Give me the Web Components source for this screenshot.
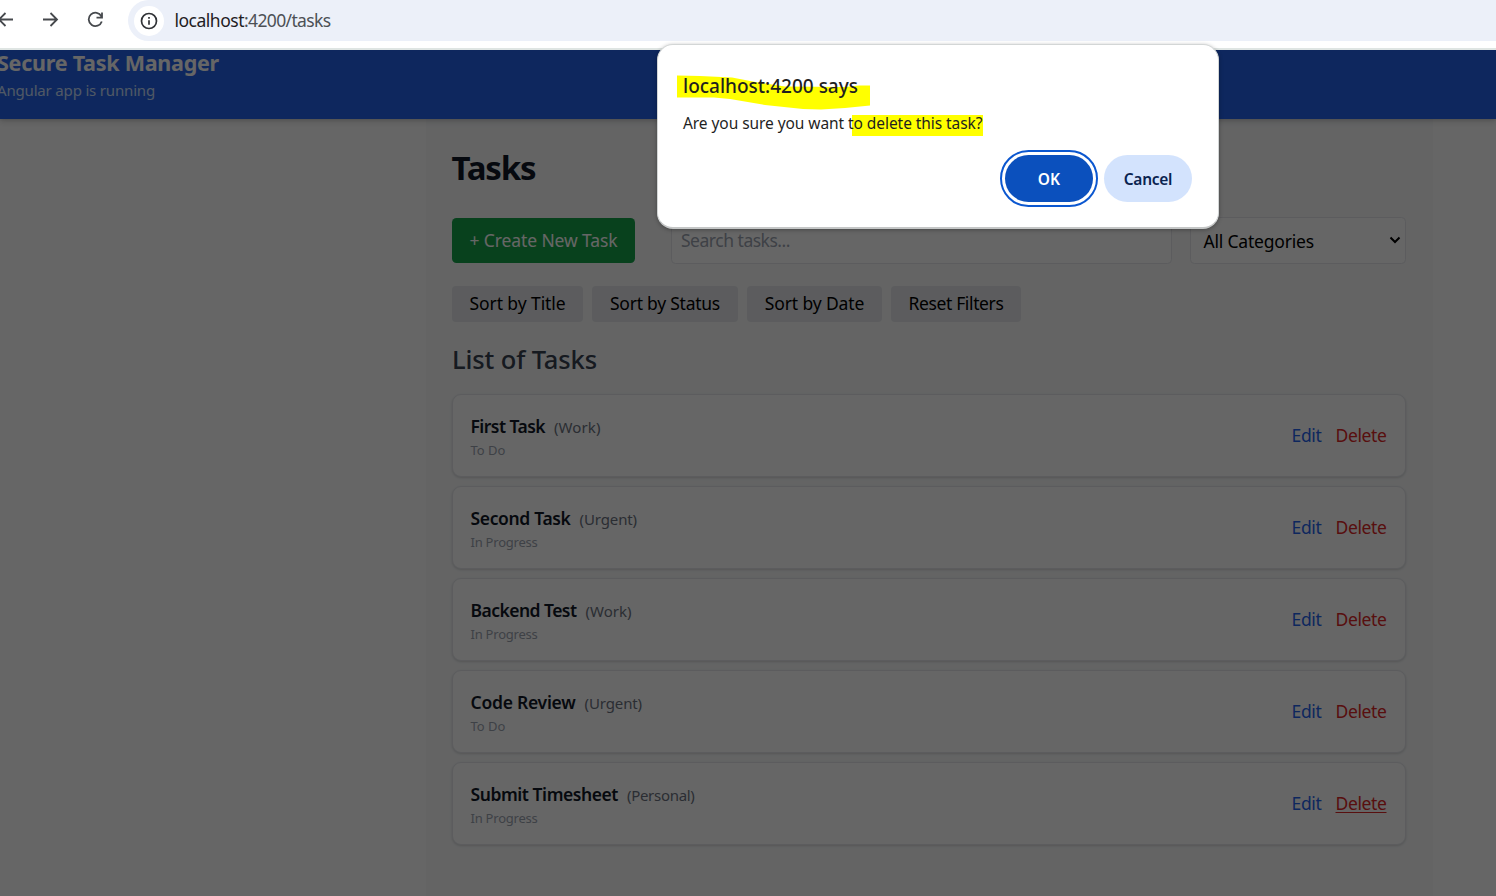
<!DOCTYPE html>
<html lang="en">
<head>
<meta charset="utf-8">
<title>Secure Task Manager</title>
<style>
html,body{margin:0;height:100%;overflow:hidden;background:#fff}
body{font-family:"Noto Sans","Open Sans",sans-serif}
</style>
</head>
<body>
<browser-window></browser-window>
<script>
const define = (name, html, setup) => {
  const t = document.createElement('template');
  t.innerHTML = '<style>*{box-sizing:border-box}:host{display:block;box-sizing:border-box}</style>' + html;
  customElements.define(name, class extends HTMLElement {
    constructor() { super(); this.attachShadow({mode: 'open'}); }
    connectedCallback() {
      if (this.shadowRoot.childNodes.length) return;
      this.shadowRoot.append(t.content.cloneNode(true));
      if (setup) setup(this, this.shadowRoot);
    }
  });
};

/* A single line of text tracked so that it fills the width given in "w". */
define('text-line', `<style>:host{display:inline-block;white-space:nowrap;flex:none}span{display:inline-block;text-decoration:var(--line,none);text-decoration-thickness:1px;text-underline-offset:2px}</style><span></span>`, (el, r) => {
  const s = r.querySelector('span');
  s.textContent = el.getAttribute('text');
  const w = +el.getAttribute('w');
  const natural = s.getBoundingClientRect().width;
  s.style.letterSpacing = ((w - natural) / s.textContent.length) + 'px';
});

define('browser-bar', `<style>
:host{height:50px;background:#fff;border-bottom:2px solid #dfe5e3;position:relative;flex:none}
.row{display:flex;height:41px}
.nav{width:128px;flex:none;display:block}
.pill{flex:1;background:#ecf0f9;border-radius:21px 0 0 21px;display:flex;align-items:center;padding-left:6px;gap:10.500px}
.info{width:30px;height:30px;border-radius:50%;background:#fff;display:flex;align-items:center;justify-content:center}
.url{display:flex;font-size:17.500px;color:#4c5056;line-height:24px;padding-bottom:2px}
.url :first-child{color:#1f2023}
</style><div class="row">
<svg class="nav" width="128" height="41" viewBox="0 0 128 41" fill="none" stroke="#46494d" stroke-width="1.8"><path d="M13 19.5H-1M5.5 13-1 19.5l6.500 6.500M43 19.500h14M50.500 13l6.500 6.500-6.500 6.500M101.400 16.300A6.700 6.700 0 1 0 101.800 21.500M102 12.500v5.200h-5.500"/></svg>
<div class="pill"><div class="info"><svg width="18" height="18" viewBox="0 0 18 18" fill="none" stroke="#303236" stroke-width="1.7"><circle cx="9" cy="9" r="7.500"/><path d="M9 8.200v4.600M9 5v1.700"/></svg></div>
<div class="url"><text-line text="localhost" w="69.5"></text-line><text-line text=":4200/tasks" w="86.500"></text-line></div></div></div>`);

define('app-header', `<style>
:host{height:69px;background:#2563eb;color:#fff;box-shadow:0 3px 6px rgba(0,0,0,.14),0 1px 3px rgba(0,0,0,.1);position:relative;z-index:1;flex:none}
.in{margin-left:-3px;display:flex;flex-direction:column}
.a{font-size:21.500px;font-weight:700;line-height:26px;height:26px}
.b{font-size:15px;line-height:24px;height:24px;color:#dbeafe;margin-top:2px;opacity:.9}
</style><div class="in"><text-line class="a" text="Secure Task Manager" w="222"></text-line><text-line class="b" text="Angular app is running" w="158"></text-line></div>`);

define('app-button', `<style>
:host{background:#e5e7eb;color:#000;border-radius:4px;display:flex;align-items:center;justify-content:center;font-size:17.500px;height:36px;line-height:24px;padding-bottom:2px}
:host([primary]){background:#16a34a;color:#fff;height:45px;border-radius:4.500px}
</style><slot></slot>`);

define('search-box', `<style>
:host{flex:none;width:501px;height:47px;border:1px solid #e5e7eb;border-radius:4.500px;background:#fff;display:flex;align-items:center;padding:0 0 2px 9px;font-size:17.500px;color:#9ca3af}
</style><text-line text="Search tasks..." w="109"></text-line>`);

define('category-select', `<style>
:host{width:216px;height:47px;border:1px solid #e5e7eb;border-radius:4.500px;background:#fff;display:flex;align-items:center;justify-content:space-between;padding:0 4px 0 12.500px;font-size:17.500px;color:#000}
text-line{margin-top:1px}svg{margin-top:-1px}
</style><text-line text="All Categories" w="110.500"></text-line><svg width="12" height="8" viewBox="0 0 12 8" fill="none" stroke="#000" stroke-width="2"><path d="M1.500 1.500 6 6l4.500-4.500"/></svg>`);

define('task-card', `<style>
:host{height:83px;background:#fff;border:1px solid #e5e7eb;border-radius:9px;box-shadow:0 1px 3px rgba(0,0,0,.1),0 1px 2px rgba(0,0,0,.05);display:flex;justify-content:space-between;align-items:center;padding:0 18.500px 0 17.500px}
.l{display:flex;flex-direction:column;padding-top:2px}
.top{display:flex;align-items:baseline;gap:9px;height:25px;line-height:25px}
.n{font-size:17.500px;font-weight:600;color:#111827}
.c{font-size:15px;color:#6b7280}
.s{font-size:13px;line-height:20px;color:#9ca3af;margin-top:1px}
.r{display:flex;gap:14px;font-size:17.500px;line-height:24px;padding-bottom:2px}
.e{color:#2563eb}.d{color:#dc2626}
:host([hovered]) .d{--line:underline}
</style><div class="l"><div class="top"></div></div><div class="r"><text-line class="e" text="Edit" w="30"></text-line><text-line class="d" text="Delete" w="51"></text-line></div>`, (el, r) => {
  const add = (parent, cls, key) => {
    const [text, w] = el.getAttribute(key).split('|');
    const t = document.createElement('text-line');
    t.className = cls; t.setAttribute('text', text); t.setAttribute('w', w);
    parent.append(t);
  };
  add(r.querySelector('.top'), 'n', 'name');
  add(r.querySelector('.top'), 'c', 'category');
  add(r.querySelector('.l'), 's', 'status');
});

define('task-page', `<style>
:host{flex:1;width:1007px;margin-left:426px;background:#f9fafb;padding:26px 27px 0 26px;display:flex;flex-direction:column}
.h1{font-size:33px;font-weight:700;color:#111827;line-height:46px;height:46px;margin-left:-.5px}
.tools{display:flex;align-items:center;margin-top:26px;height:47px}
.tools app-button{width:183px;margin-right:36px}
search-box{margin-right:18px}
.sorts{display:flex;gap:9px;margin-top:22px}
.h2{font-size:25.500px;font-weight:500;color:#374151;line-height:38px;height:40px;margin-top:18px}
.list{display:flex;flex-direction:column;gap:9px;margin-top:14px}
</style>
<text-line class="h1" text="Tasks" w="84"></text-line>
<div class="tools"><app-button primary><text-line text="+ Create New Task" w="148"></text-line></app-button><search-box></search-box><category-select></category-select></div>
<div class="sorts">
<app-button style="width:131px"><text-line text="Sort by Title" w="96"></text-line></app-button>
<app-button style="width:146px"><text-line text="Sort by Status" w="110"></text-line></app-button>
<app-button style="width:135px"><text-line text="Sort by Date" w="99.500"></text-line></app-button>
<app-button style="width:130px"><text-line text="Reset Filters" w="95"></text-line></app-button></div>
<text-line class="h2" text="List of Tasks" w="145"></text-line>
<div class="list">
<task-card name="First Task|74.5" category="(Work)|46.5" status="To Do|35"></task-card>
<task-card name="Second Task|100" category="(Urgent)|57.5" status="In Progress|67"></task-card>
<task-card name="Backend Test|106" category="(Work)|46" status="In Progress|67"></task-card>
<task-card name="Code Review|105" category="(Urgent)|57.5" status="To Do|35"></task-card>
<task-card hovered name="Submit Timesheet|147.500" category="(Personal)|67.500" status="In Progress|67"></task-card>
</div>`);

define('confirm-dialog', `<style>
:host{position:absolute;left:657px;top:44px;width:562px;height:185px;background:#fff;border:1px solid #d3d6d6;border-bottom:2px solid #c4c6c6;border-radius:16px;z-index:5;padding:27px 26px 0 25px;box-shadow:0 1px 4px rgba(0,0,0,.3)}
.mark{position:absolute;left:-1px;top:-1px}
.col{position:relative;display:flex;flex-direction:column;height:100%}
.t{font-size:19px;font-weight:500;color:#1f1f1f;line-height:29px;height:28px}
.m{font-size:15.500px;color:#1f1f1f;line-height:25px;height:24px;margin-top:11px}
.btns{display:flex;justify-content:flex-end;gap:11px;margin-top:20px}
.b{width:88px;height:47px;border-radius:24px;display:flex;align-items:center;justify-content:center;font-size:15.500px;font-weight:600;background:#d3e3fd;color:#0a2350;padding-top:1px}
.ok{background:#0b50bd;color:#fff;outline:2px solid #0b57d0;outline-offset:3px}
</style>
<svg class="mark" width="562" height="185" viewBox="657 44 562 185" fill="#ff0"><path d="M677 75.500 700 76l32 1.500 26 5 27 4 60 .500 14-1.500h11V105.500L845 108l-24 1.500-18-.500-38-4-35-6-16-1.500H677ZM852 115h131v21H852Z"/></svg>
<div class="col"><text-line class="t" text="localhost:4200 says" w="175"></text-line>
<text-line class="m" text="Are you sure you want to delete this task?" w="299.500"></text-line>
<div class="btns"><div class="b ok"><text-line text="OK" w="22.500"></text-line></div><div class="b"><text-line text="Cancel" w="48.500"></text-line></div></div></div>`);

define('browser-window', `<style>
:host{position:relative;width:1496px;height:896px;overflow:hidden;display:flex;flex-direction:column;background:#fff}
.view{position:relative;flex:1;display:flex;flex-direction:column;overflow:hidden}
.dim{position:absolute;inset:0;background:rgba(0,0,0,.6);z-index:2}
</style><browser-bar></browser-bar><div class="view"><app-header></app-header><task-page></task-page><div class="dim"></div></div><confirm-dialog></confirm-dialog>`);
</script>
</body>
</html>
